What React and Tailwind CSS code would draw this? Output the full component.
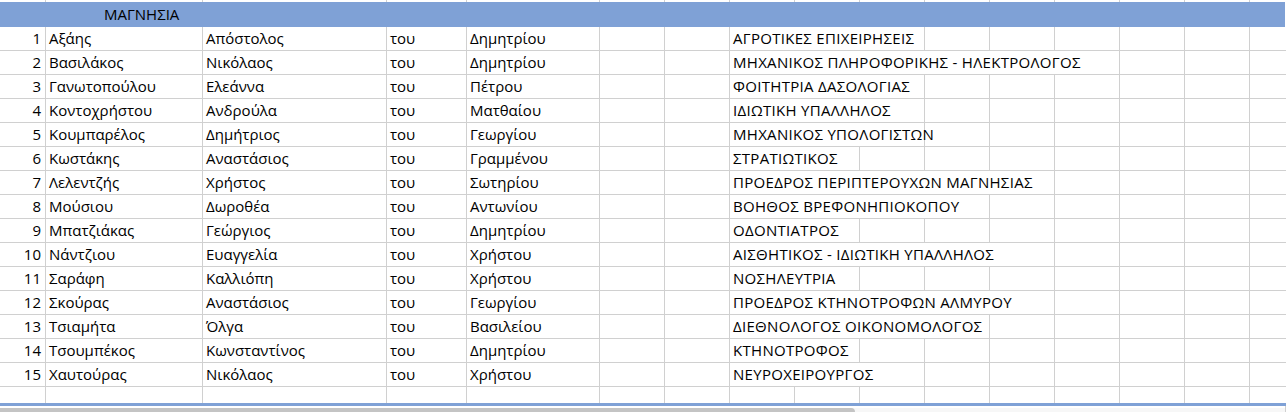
import React from 'react';

const rows = [
  ['Αξάης', 'Απόστολος', 'Δημητρίου', 'ΑΓΡΟΤΙΚΕΣ ΕΠΙΧΕΙΡΗΣΕΙΣ', 3],
  ['Βασιλάκος', 'Νικόλαος', 'Δημητρίου', 'ΜΗΧΑΝΙΚΟΣ ΠΛΗΡΟΦΟΡΙΚΗΣ - ΗΛΕΚΤΡΟΛΟΓΟΣ', 6],
  ['Γανωτοπούλου', 'Ελεάννα', 'Πέτρου', 'ΦΟΙΤΗΤΡΙΑ ΔΑΣΟΛΟΓΙΑΣ', 3],
  ['Κοντοχρήστου', 'Ανδρούλα', 'Ματθαίου', 'ΙΔΙΩΤΙΚΗ ΥΠΑΛΛΗΛΟΣ', 3],
  ['Κουμπαρέλος', 'Δημήτριος', 'Γεωργίου', 'ΜΗΧΑΝΙΚΟΣ ΥΠΟΛΟΓΙΣΤΩΝ', 3],
  ['Κωστάκης', 'Αναστάσιος', 'Γραμμένου', 'ΣΤΡΑΤΙΩΤΙΚΟΣ', 2],
  ['Λελεντζής', 'Χρήστος', 'Σωτηρίου', 'ΠΡΟΕΔΡΟΣ ΠΕΡΙΠΤΕΡΟΥΧΩΝ ΜΑΓΝΗΣΙΑΣ', 5],
  ['Μούσιου', 'Δωροθέα', 'Αντωνίου', 'ΒΟΗΘΟΣ ΒΡΕΦΟΝΗΠΙΟΚΟΠΟΥ', 4],
  ['Μπατζιάκας', 'Γεώργιος', 'Δημητρίου', 'ΟΔΟΝΤΙΑΤΡΟΣ', 2],
  ['Νάντζιου', 'Ευαγγελία', 'Χρήστου', 'ΑΙΣΘΗΤΙΚΟΣ - ΙΔΙΩΤΙΚΗ ΥΠΑΛΛΗΛΟΣ', 5],
  ['Σαράφη', 'Καλλιόπη', 'Χρήστου', 'ΝΟΣΗΛΕΥΤΡΙΑ', 2],
  ['Σκούρας', 'Αναστάσιος', 'Γεωργίου', 'ΠΡΟΕΔΡΟΣ ΚΤΗΝΟΤΡΟΦΩΝ ΑΛΜΥΡΟΥ', 5],
  ['Τσιαμήτα', 'Όλγα', 'Βασιλείου', 'ΔΙΕΘΝΟΛΟΓΟΣ ΟΙΚΟΝΟΜΟΛΟΓΟΣ', 4],
  ['Τσουμπέκος', 'Κωνσταντίνος', 'Δημητρίου', 'ΚΤΗΝΟΤΡΟΦΟΣ', 2],
  ['Χαυτούρας', 'Νικόλαος', 'Χρήστου', 'ΝΕΥΡΟΧΕΙΡΟΥΡΓΟΣ', 3],
];

const grid = 'grid grid-cols-[46px_157px_184px_80px_133px_repeat(11,65px)]';
const cell = 'border-r border-[#d0d0d0] px-[3px] flex items-center whitespace-nowrap overflow-visible';

const EmptyCells = ({ count }) =>
  Array.from({ length: count }).map((_, i) => <div key={i} className="border-r border-[#d0d0d0]" />);

const Row = ({ n, row }) => {
  const [last, first, father, job, span] = row;
  return (
    <div className={`${grid} h-[24px] border-b border-[#d0d0d0]`}>
      <div className={`${cell} justify-end pr-[4px]`}>{n}</div>
      <div className={cell}>{last}</div>
      <div className={cell}>{first}</div>
      <div className={cell}>του</div>
      <div className={cell}>{father}</div>
      <div className="border-r border-[#d0d0d0]" />
      <div className="border-r border-[#d0d0d0]" />
      {/* job text spills over the empty cells to its right, like Excel */}
      <div className={`${cell} tracking-[0.3px]`} style={{ gridColumn: `span ${span} / span ${span}` }}>
        {job}
      </div>
      <EmptyCells count={11 - 2 - span} />
    </div>
  );
};

export default function App() {
  return (
    <div className="w-[1286px] h-[412px] overflow-hidden bg-white text-black text-[15px] font-['Open_Sans',sans-serif] flex flex-col">
      {/* sliver of the row above */}
      <div className={`${grid} h-[2px] shrink-0`}>
        <EmptyCells count={16} />
      </div>

      {/* region header */}
      <div className="h-[25px] shrink-0 bg-[#7fa1d6] flex items-center pl-[104px] mr-[1px]">ΜΑΓΝΗΣΙΑ</div>

      {rows.map((r, i) => (
        <Row key={i} n={i + 1} row={r} />
      ))}

      {/* empty row */}
      <div className={`${grid} h-[16px] shrink-0`}>
        <EmptyCells count={16} />
      </div>

      {/* sheet bottom edge + scrollbar */}
      <div className="h-[3px] shrink-0 bg-[#7fa1d6]" />
      <div className="flex-1 flex flex-col bg-[#f7f7f7] border-r border-[#d0d0d0]">
        <div className="h-[2px] bg-white" />
        <div className="flex-1 w-[855px] bg-[#c4c4c4] rounded-tr-[6px]" />
      </div>
    </div>
  );
}
